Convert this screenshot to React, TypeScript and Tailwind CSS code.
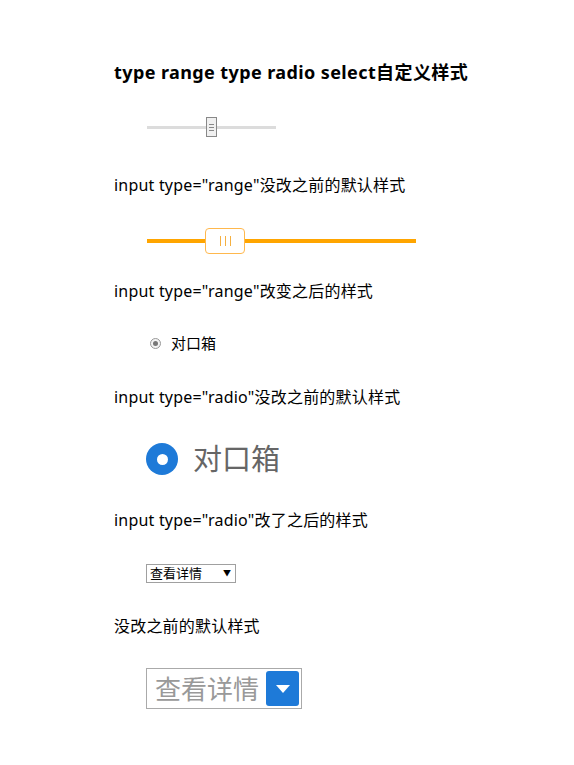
export default function App() {
  const font = 'font-["Noto_Sans","Noto_Sans_CJK_SC",sans-serif]';
  return (
    <div className={`min-h-[765px] w-[574px] bg-white pl-[114px] text-black ${font}`}>
      {/* 标题 */}
      <h1 className="pt-[60px] h-[84px] text-[18px] font-bold leading-[24px] tracking-[0.4px]">
        type range type radio select自定义样式
      </h1>

      {/* 默认 range */}
      <div className="mt-[30px] flex h-[26px] items-center pl-[33px]">
        <div className="relative flex h-[26px] w-[129px] items-center">
          <div className="h-[3px] w-full bg-[#dcdcdc]" />
          <div className="absolute left-[59px] top-[3px] flex h-[20px] w-[11px] flex-col items-center justify-center gap-[2px] border border-[#888] bg-[#f0f0f0]">
            <span className="h-px w-[5px] bg-[#888]" />
            <span className="h-px w-[5px] bg-[#888]" />
            <span className="h-px w-[5px] bg-[#888]" />
          </div>
        </div>
      </div>

      <p className="mt-[35px] h-[20px] text-[16px] leading-[20px] tracking-[0.2px]">input type="range"没改之前的默认样式</p>

      {/* 自定义 range */}
      <div className="mt-[33px] flex h-[26px] items-center pl-[33px]">
        <div className="relative flex h-[26px] w-[269px] items-center">
          <div className="h-[4px] w-full bg-[#ffa500]" />
          <div className="absolute left-[58px] top-0 flex h-[26px] w-[40px] items-center justify-center gap-[4px] rounded-[4px] border border-[#ffb84d] bg-white">
            <span className="h-[10px] w-px bg-[#f5b041]" />
            <span className="h-[10px] w-px bg-[#f5b041]" />
            <span className="h-[10px] w-px bg-[#f5b041]" />
          </div>
        </div>
      </div>

      <p className="mt-[27px] h-[20px] text-[16px] leading-[20px] tracking-[0.2px]">input type="range"改变之后的样式</p>

      {/* 默认 radio */}
      <label className="mt-[32px] flex h-[20px] items-center pl-[36px] text-[15px]">
        <span className="flex h-[11px] w-[11px] items-center justify-center rounded-full border border-[#999] bg-[#f3f3f3]">
          <span className="h-[5px] w-[5px] rounded-full bg-[#777]" />
        </span>
        <span className="ml-[10px]">对口箱</span>
      </label>

      <p className="mt-[34px] h-[20px] text-[16px] leading-[20px] tracking-[0.2px]">input type="radio"没改之前的默认样式</p>

      {/* 自定义 radio */}
      <label className="mt-[35px] flex h-[34px] items-center pl-[32px]">
        <span className="flex h-[32px] w-[32px] items-center justify-center rounded-full bg-[#1e7ad8]">
          <span className="h-[11px] w-[11px] rounded-full bg-white" />
        </span>
        <span className="ml-[15px] text-[29px] leading-[34px] text-[#666]">对口箱</span>
      </label>

      <p className="mt-[34px] h-[20px] text-[16px] leading-[20px] tracking-[0.2px]">input type="radio"改了之后的样式</p>

      {/* 默认 select */}
      <div className="mt-[33px] flex h-[20px] items-center pl-[32px]">
        <div className="flex h-[19px] w-[90px] items-center justify-between border border-[#a0a0a0] pl-[3px] pr-[4px] text-[13px] leading-none">
          <span>查看详情</span>
          <span className="text-[8px]">▼</span>
        </div>
      </div>

      <p className="mt-[33px] h-[20px] text-[16px] leading-[20px] tracking-[0.2px]">没改之前的默认样式</p>

      {/* 自定义 select */}
      <div className="mt-[32px] pl-[32px]">
        <div className="flex h-[41px] w-[156px] items-center justify-between border border-[#aaa] pl-[8px] pr-[2px]">
          <span className="text-[26px] leading-none text-[#999]">查看详情</span>
          <span className="flex h-[35px] w-[33px] items-center justify-center rounded-[3px] bg-[#1e7ad8]">
            <svg width="14" height="8" viewBox="0 0 14 8">
              <path d="M0 0 H14 L7 8 Z" fill="#fff" />
            </svg>
          </span>
        </div>
      </div>
    </div>
  );
}
